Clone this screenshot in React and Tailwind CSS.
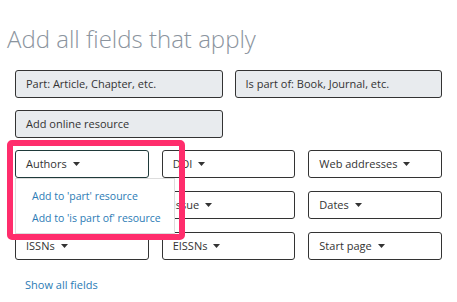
import React from "react";

const Caret = () => (
  <svg width="7" height="4" viewBox="0 0 7 4" className="ml-[6px] inline-block">
    <path d="M0 0h7L3.5 4z" fill="#333" />
  </svg>
);

const FieldButton = ({ label, active }) => (
  <div
    className={`flex h-[28px] items-center rounded-[3px] bg-white pl-[10px] text-[11px] text-[#333] ${
      active ? "border-[1.5px] border-[#1f3a3a]" : "border border-[#333]"
    }`}
  >
    {label}
    {label && <Caret />}
  </div>
);

const GrayButton = ({ label }) => (
  <div className="flex h-[28px] items-center rounded-[3px] border border-[#333] bg-[#e8ebee] pl-[10px] text-[11px] text-[#333]">
    {label}
  </div>
);

const App = () => {
  return (
    <div
      className="relative h-[302px] w-[457px] overflow-hidden bg-white"
      style={{ fontFamily: '"Open Sans", "Liberation Sans", sans-serif' }}
    >
      <h1 className="pl-[7px] pt-[24px] text-[24px] font-light leading-[29px] text-[#8b949e]">
        Add all fields that apply
      </h1>

      <div className="px-[15px] pt-[17px]">
        <div className="grid grid-cols-2 gap-x-[12px] gap-y-[12px]">
          <GrayButton label="Part: Article, Chapter, etc." />
          <GrayButton label="Is part of: Book, Journal, etc." />
          <GrayButton label="Add online resource" />
        </div>

        <div className="mt-[12px] grid grid-cols-3 gap-x-[13px] gap-y-[13px]">
          <div className="relative">
            <FieldButton label="Authors" active />
            {/* dropdown menu */}
            <div className="absolute left-0 top-[28px] z-10 flex h-[56px] w-[160px] flex-col gap-[9px] border border-[#ddd] bg-white pl-[16px] pt-[11px] text-[10.5px] leading-[13px] text-[#2b7bb5]">
              <span>Add to 'part' resource</span>
              <span>Add to 'is part of' resource</span>
            </div>
          </div>
          <FieldButton label="DOI" />
          <FieldButton label="Web addresses" />
          {/* sits under the open menu */}
          <FieldButton label="" />
          <FieldButton label="Issue" />
          <FieldButton label="Dates" />
          <FieldButton label="ISSNs" />
          <FieldButton label="EISSNs" />
          <FieldButton label="Start page" />
        </div>

        <div className="pl-[10px] pt-[17px] text-[11px] font-medium text-[#2b7bb5]">
          Show all fields
        </div>
      </div>

      {/* highlight annotation */}
      <div className="pointer-events-none absolute left-[7px] top-[140px] z-20 h-[100px] w-[178px] rounded-[5px] border-[6px] border-[#ff2d6c]" />
    </div>
  );
};

export default App;
